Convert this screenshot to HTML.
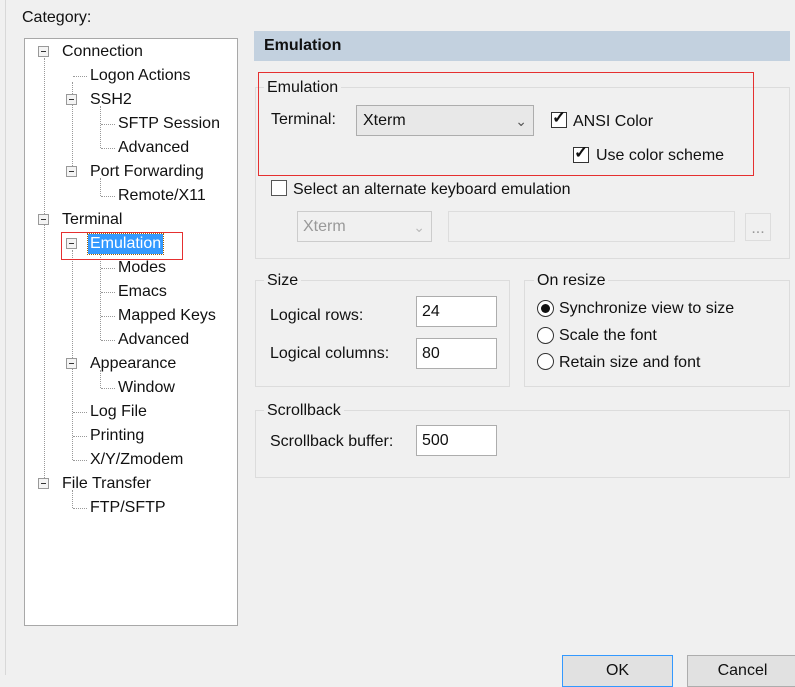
<!DOCTYPE html>
<html><head><style>
body{margin:0;width:795px;height:675px;background:#f0f0f0;font-family:"Liberation Sans",sans-serif;font-size:16px;color:#111;position:relative;overflow:hidden}
.a{position:absolute;white-space:nowrap}
.tree{position:absolute;left:24px;top:38px;width:212px;height:586px;background:#fff;border:1px solid #a8a8a8}
.exp{position:absolute;width:9px;height:9px;border:1px solid #999;background:#f4f4f4}
.exp:after{content:"";position:absolute;left:2px;top:4px;width:5px;height:1px;background:#333}
.vl{position:absolute;border-left:1px dotted #999;width:0}
.hl{position:absolute;border-top:1px dotted #999;height:0}
.grp{position:absolute;border:1px solid #dcdcdc}
.lg{position:absolute;background:#f0f0f0;padding:0 3px}
.in{position:absolute;background:#fff;border:1px solid #adadad;box-sizing:border-box;padding-left:5px;line-height:30px}
.cb{position:absolute;width:16px;height:16px;border:1px solid #333;background:#fff;box-sizing:border-box}
.rd{position:absolute;width:17px;height:17px;border:1px solid #333;border-radius:50%;background:#fff;box-sizing:border-box}
</style></head><body>
<div class="a" style="left:0;top:0;width:5px;height:675px;border-right:1px solid #d8d8d8"></div>
<div class="a" style="left:22px;top:9px">Category:</div>
<div class="tree"></div>
<div class="vl" style="left:44px;top:58px;height:426px"></div>
<div class="vl" style="left:72px;top:82px;height:90px"></div>
<div class="vl" style="left:100px;top:106px;height:42px"></div>
<div class="vl" style="left:100px;top:178px;height:18px"></div>
<div class="vl" style="left:72px;top:250px;height:210px"></div>
<div class="vl" style="left:100px;top:250px;height:90px"></div>
<div class="vl" style="left:100px;top:370px;height:18px"></div>
<div class="vl" style="left:72px;top:490px;height:18px"></div>
<div class="hl" style="left:73px;top:76px;width:14px"></div>
<div class="hl" style="left:101px;top:124px;width:14px"></div>
<div class="hl" style="left:101px;top:148px;width:14px"></div>
<div class="hl" style="left:101px;top:196px;width:14px"></div>
<div class="hl" style="left:101px;top:268px;width:14px"></div>
<div class="hl" style="left:101px;top:292px;width:14px"></div>
<div class="hl" style="left:101px;top:316px;width:14px"></div>
<div class="hl" style="left:101px;top:340px;width:14px"></div>
<div class="hl" style="left:101px;top:388px;width:14px"></div>
<div class="hl" style="left:73px;top:412px;width:14px"></div>
<div class="hl" style="left:73px;top:436px;width:14px"></div>
<div class="hl" style="left:73px;top:460px;width:14px"></div>
<div class="hl" style="left:73px;top:508px;width:14px"></div>
<div class="exp" style="left:38px;top:46px"></div>
<div class="exp" style="left:66px;top:94px"></div>
<div class="exp" style="left:66px;top:166px"></div>
<div class="exp" style="left:38px;top:214px"></div>
<div class="exp" style="left:66px;top:238px"></div>
<div class="exp" style="left:66px;top:358px"></div>
<div class="exp" style="left:38px;top:478px"></div>
<div class="a" style="left:62px;top:43px">Connection</div>
<div class="a" style="left:90px;top:67px">Logon Actions</div>
<div class="a" style="left:90px;top:91px">SSH2</div>
<div class="a" style="left:118px;top:115px">SFTP Session</div>
<div class="a" style="left:118px;top:139px">Advanced</div>
<div class="a" style="left:90px;top:163px">Port Forwarding</div>
<div class="a" style="left:118px;top:187px">Remote/X11</div>
<div class="a" style="left:62px;top:211px">Terminal</div>
<div class="a" style="left:88px;top:234px;background:#3399ff;color:#fff;padding:1px 2px;outline:1px dotted #a06000">Emulation</div>
<div class="a" style="left:61px;top:232px;width:120px;height:26px;border:1px solid #e53030"></div>
<div class="a" style="left:118px;top:259px">Modes</div>
<div class="a" style="left:118px;top:283px">Emacs</div>
<div class="a" style="left:118px;top:307px">Mapped Keys</div>
<div class="a" style="left:118px;top:331px">Advanced</div>
<div class="a" style="left:90px;top:355px">Appearance</div>
<div class="a" style="left:118px;top:379px">Window</div>
<div class="a" style="left:90px;top:403px">Log File</div>
<div class="a" style="left:90px;top:427px">Printing</div>
<div class="a" style="left:90px;top:451px">X/Y/Zmodem</div>
<div class="a" style="left:62px;top:475px">File Transfer</div>
<div class="a" style="left:90px;top:499px">FTP/SFTP</div>

<div class="a" style="left:254px;top:31px;width:536px;height:30px;background:#c3d1df;font-weight:bold;line-height:30px;padding-left:10px;box-sizing:border-box">Emulation</div>
<div class="grp" style="left:255px;top:87px;width:533px;height:170px"></div>
<div class="lg" style="left:264px;top:79px">Emulation</div>
<div class="a" style="left:258px;top:72px;width:494px;height:102px;border:1px solid #e53030"></div>
<div class="a" style="left:271px;top:111px">Terminal:</div>
<div class="in" style="left:356px;top:105px;width:178px;height:31px;background:#e8e8e8;padding-left:6px">Xterm<span style="position:absolute;right:6px;color:#555;font-size:14px">&#8964;</span></div>
<div class="cb" style="left:551px;top:112px"><span class="a" style="left:0px;top:-5px;font-size:17px;font-weight:bold">&#10003;</span></div>
<div class="a" style="left:573px;top:113px">ANSI Color</div>
<div class="cb" style="left:573px;top:147px"><span class="a" style="left:0px;top:-5px;font-size:17px;font-weight:bold">&#10003;</span></div>
<div class="a" style="left:596px;top:147px">Use color scheme</div>
<div class="cb" style="left:271px;top:180px;border-color:#555"></div>
<div class="a" style="left:293px;top:181px">Select an alternate keyboard emulation</div>
<div class="in" style="left:297px;top:211px;width:135px;height:31px;background:#f0f0f0;border-color:#ccc;color:#999">Xterm<span style="position:absolute;right:6px;color:#bbb;font-size:14px">&#8964;</span></div>
<div class="in" style="left:448px;top:211px;width:287px;height:31px;background:#f0f0f0;border-color:#ddd"></div>
<div class="in" style="left:745px;top:213px;width:26px;height:28px;background:#f0f0f0;border-color:#ddd;color:#999;padding:0;text-align:center">...</div>
<div class="grp" style="left:255px;top:280px;width:253px;height:105px"></div>
<div class="lg" style="left:264px;top:272px">Size</div>
<div class="a" style="left:270px;top:307px">Logical rows:</div>
<div class="in" style="left:416px;top:296px;width:81px;height:31px">24</div>
<div class="a" style="left:270px;top:345px">Logical columns:</div>
<div class="in" style="left:416px;top:338px;width:81px;height:31px">80</div>
<div class="grp" style="left:524px;top:280px;width:264px;height:105px"></div>
<div class="lg" style="left:534px;top:272px">On resize</div>
<div class="rd" style="left:537px;top:300px"><span class="a" style="left:3px;top:3px;width:9px;height:9px;border-radius:50%;background:#111"></span></div>
<div class="a" style="left:559px;top:300px">Synchronize view to size</div>
<div class="rd" style="left:537px;top:327px"></div>
<div class="a" style="left:559px;top:327px">Scale the font</div>
<div class="rd" style="left:537px;top:353px"></div>
<div class="a" style="left:559px;top:354px">Retain size and font</div>
<div class="grp" style="left:255px;top:410px;width:533px;height:66px"></div>
<div class="lg" style="left:264px;top:402px">Scrollback</div>
<div class="a" style="left:270px;top:433px">Scrollback buffer:</div>
<div class="in" style="left:416px;top:425px;width:81px;height:31px">500</div>
<div class="a" style="left:562px;top:655px;width:109px;height:30px;border:1px solid #3399ff;background:#e1e1e1;text-align:center;line-height:30px">OK</div>
<div class="a" style="left:687px;top:655px;width:109px;height:30px;border:1px solid #adadad;background:#e1e1e1;text-align:center;line-height:30px">Cancel</div>
</body></html>
